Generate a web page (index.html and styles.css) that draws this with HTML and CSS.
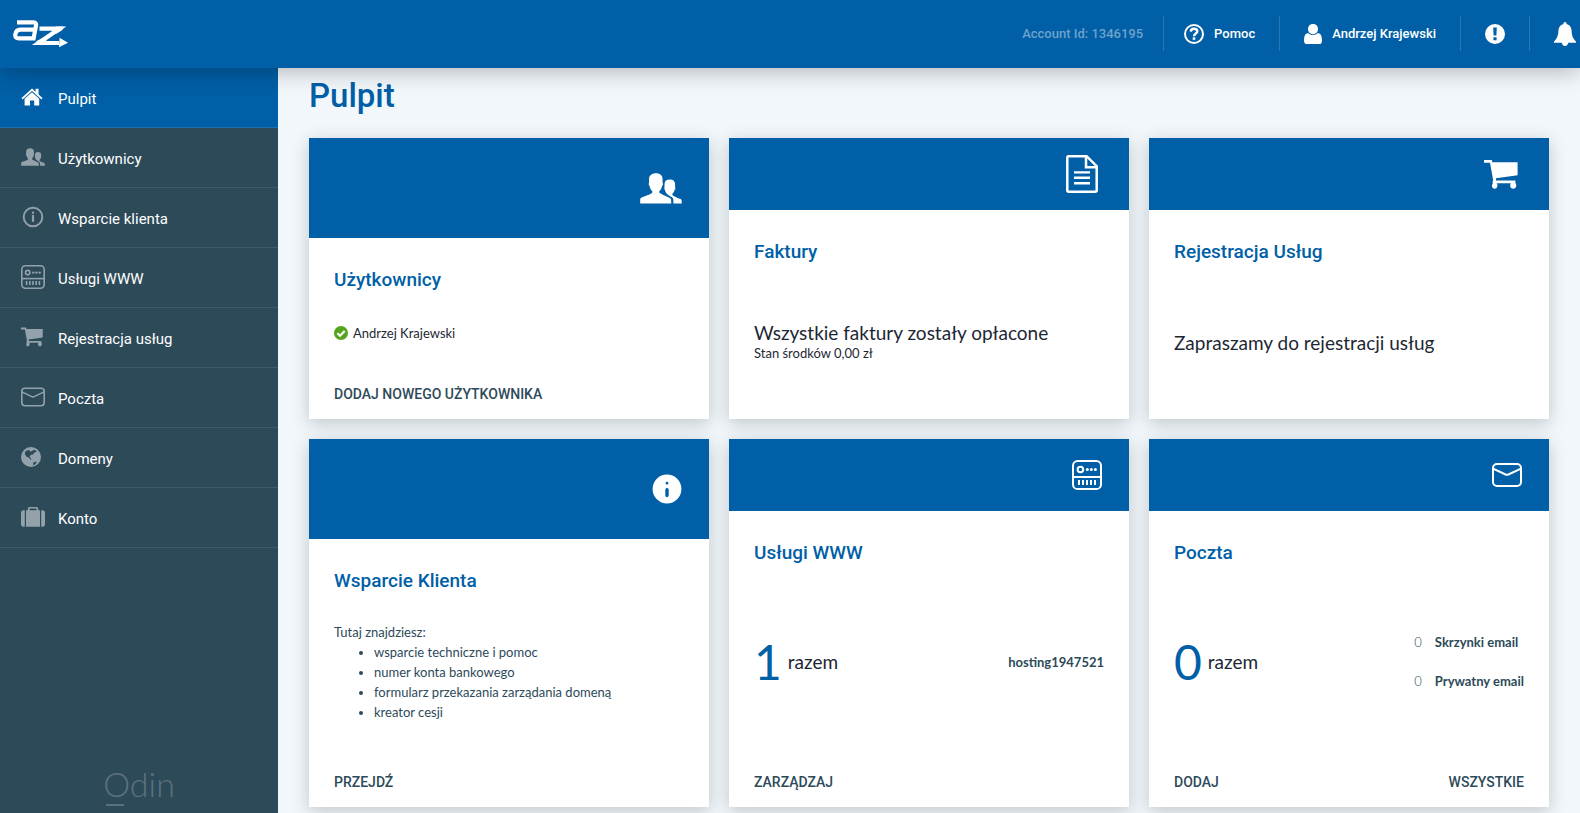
FILE: index.html
```html
<!DOCTYPE html>
<html lang="pl">
<head>
<meta charset="utf-8">
<title>Pulpit</title>
<meta name="viewport" content="width=device-width, initial-scale=1">
<link rel="stylesheet" href="styles.css">
</head>
<body>
<svg class="sprite" aria-hidden="true">
  <symbol id="i-home" viewBox="0 0 22 18">
    <path d="M11 0.5 L14.6 3.8 V0.8 H17.6 V6.6 L21.5 10.1 L20.4 11.4 L11 2.9 L1.6 11.4 L0.5 10.1 Z"/>
    <path d="M11 4.3 L18.2 10.8 V17.5 H13.2 V12.4 H9 V17.5 H3.6 V10.8 Z"/>
  </symbol>
  <symbol id="i-users" viewBox="0 0 42 31">
    <path d="M16 0.3 C20.5 0.3 22.6 2.6 22.6 6.4 V10 C23.2 10.2 23.1 12.4 22.2 12.8 C21.8 15.4 20.6 17 19.3 18.2 V19.6 C20.5 21.3 27 23.4 30.2 25.2 C31.2 25.9 31.2 27 31.2 30.6 H0.2 V26.4 C0.2 25.2 0.8 24.8 1.8 24.4 C6 22.6 11 21.2 12.3 19.4 V18.2 C10.9 17 9.9 15.4 9.5 12.8 C8.6 12.4 8.5 10.2 9 10 V6.4 C9 2.6 11.5 0.3 16 0.3 Z"/>
    <path d="M29.8 6.6 C33.4 6.6 35.1 8.5 35.1 11.4 V14.2 C35.6 14.5 35.5 16.4 34.7 16.7 C34.3 18.6 33.4 19.8 32.4 20.8 V21.9 C33.4 23.3 38 24.8 40.6 26 C41.6 26.5 41.8 27 41.8 30.6 H33.4 C33.4 26.6 33.5 25.4 32 24.2 C30.6 23.2 28.9 22.4 27.6 21.4 C25.7 20 25.1 17.8 24.9 16.7 C24.2 16.4 24.1 14.5 24.5 14.2 V11.4 C24.5 8.5 26.2 6.6 29.8 6.6 Z"/>
  </symbol>
  <symbol id="i-info-line" viewBox="0 0 22 22">
    <circle cx="11" cy="11" r="9.3" fill="none" stroke="currentColor" stroke-width="1.9"/>
    <rect x="9.9" y="9" width="2.2" height="6.8"/><rect x="9.9" y="5.6" width="2.2" height="2.1"/>
  </symbol>
  <symbol id="i-server" viewBox="0 0 30 30">
    <g fill="none" stroke="currentColor" stroke-width="2"><rect x="1" y="1" width="28" height="28" rx="4.6"/><path d="M1 17 H29"/><circle cx="8.4" cy="9.5" r="2.8"/></g>
    <circle cx="15.3" cy="9.5" r="1.5"/><circle cx="19.3" cy="9.5" r="1.5"/><circle cx="23.4" cy="9.5" r="1.5"/>
    <path d="M6 20h2v5H6zM10 20h2v5h-2zM14 20h2v5h-2zM18 20h2v5h-2zM22 20h2v5h-2z"/>
  </symbol>
  <symbol id="i-cart" viewBox="0 0 34 29">
    <path d="M0 0 H7.4 C8 0 8.2 0.8 8.3 2.3 H33.6 V15.3 L12 18.2 V20.6 H31.4 V23 C32.4 23.6 32.2 25 32.2 26 C32 29.6 26.4 29.6 26.2 26 C26.2 24.9 26.3 24 27 23.2 H12.6 C13.4 24 13.6 25 13.4 26 C13.1 29.6 8 29.6 8 26 C8 24.8 8.3 23.8 9 23.2 C8.4 22.2 8.2 21.4 9.2 20.4 L6 2.8 H0 Z"/>
  </symbol>
  <symbol id="i-mail" viewBox="0 0 30 24">
    <g fill="none" stroke="currentColor" stroke-width="2"><rect x="1" y="1" width="28" height="22" rx="4"/><path d="M1 5.6 L13.6 11.5 Q15 12.2 16.4 11.5 L29 5.6"/></g>
  </symbol>
  <symbol id="i-globe" viewBox="0 0 20 20">
    <path fill-rule="evenodd" d="M10 0 A10 10 0 1 1 10 20 A10 10 0 1 1 10 0 Z M7.4 2.8 L4.4 4.6 L3.8 7 L5.6 9.8 L8 10.8 L9.6 12.8 L10.4 12.6 L9.6 10.8 L8.6 9.6 L10 7.8 L12 7.6 L13.4 5.6 L15.8 4.8 L14.4 3.2 L12.4 2.8 L11 4.2 L9.4 4.4 Z M12.2 15.6 L15.8 14.4 L14.6 17 L12 18.2 Z"/>
  </symbol>
  <symbol id="i-case" viewBox="0 0 24 20">
    <path d="M3.8 3.2 H2.6 Q0 3.2 0 6 V17 Q0 19.8 2.6 19.8 H3.8 Z M20.2 3.2 H21.4 Q24 3.2 24 6 V17 Q24 19.8 21.4 19.8 H20.2 Z"/>
    <path fill-rule="evenodd" d="M5 3.2 H6.8 V1.6 Q6.8 0 8.4 0 H15.6 Q17.2 0 17.2 1.6 V3.2 H19 V19.8 H5 Z M8.6 1.6 V3.2 H15.4 V1.6 Z"/>
  </symbol>
  <symbol id="i-help" viewBox="0 0 20 20">
    <circle cx="10" cy="10" r="9" fill="none" stroke="currentColor" stroke-width="2"/>
    <path d="M6.8 7.6 C6.9 5.6 8.2 4.7 10 4.7 C12 4.7 13.3 5.8 13.3 7.4 C13.3 9.6 10 9.5 10 12.3" fill="none" stroke="currentColor" stroke-width="2.4"/>
    <rect x="8.7" y="13.4" width="2.6" height="2.4"/>
  </symbol>
  <symbol id="i-user" viewBox="0 0 18 20">
    <path d="M9 0 C12.2 0 14 2.2 14 5 C14 7.8 12 10.3 9 10.3 C6 10.3 4 7.8 4 5 C4 2.2 5.8 0 9 0 Z"/>
    <path d="M4.2 9 C6.6 11.8 11.4 11.8 13.8 9 C16.8 9.4 18 12 18 16.4 C18 18.8 17 20 15 20 H3 C1 20 0 18.8 0 16.4 C0 12 1.2 9.4 4.2 9 Z"/>
  </symbol>
  <symbol id="i-alert" viewBox="0 0 20 20">
    <path fill-rule="evenodd" d="M10 0 A10 10 0 1 1 10 20 A10 10 0 1 1 10 0 Z M8.2 3.4 L8.6 11.6 H11.4 L11.8 3.4 Z M8.4 13.2 V16.2 H11.6 V13.2 Z"/>
  </symbol>
  <symbol id="i-bell" viewBox="0 0 22 24">
    <path d="M11 0 C12 0 12.7 0.8 12.6 1.9 C16 2.8 17.4 5.4 17.6 8.8 C17.9 14 19 16.6 22 19.6 V20.8 H14.2 C14 22.8 12.8 24 11 24 C9.2 24 8 22.8 7.8 20.8 H0 V19.6 C3 16.6 4.1 14 4.4 8.8 C4.6 5.4 6 2.8 9.4 1.9 C9.3 0.8 10 0 11 0 Z"/>
  </symbol>
  <symbol id="i-doc" viewBox="0 0 32 38">
    <path d="M2.6 1.2 H20.6 L30.7 11.2 V35.2 Q30.7 36.7 29.2 36.7 H2.8 Q1.3 36.7 1.3 35.2 V2.6 Q1.3 1.2 2.6 1.2 Z M20 1.5 V12.2 H30.4" fill="none" stroke="currentColor" stroke-width="2.5"/>
    <path d="M8 16.2h16v2.4H8zM8 21.6h16V24H8zM8 27h16v2.4H8z"/>
  </symbol>
  <symbol id="i-info" viewBox="0 0 30 30">
    <path fill-rule="evenodd" d="M15 0.6 A14.4 14.4 0 1 1 15 29.4 A14.4 14.4 0 1 1 15 0.6 Z M15 7.8 A1.4 1.4 0 1 0 15 10.6 A1.4 1.4 0 1 0 15 7.8 Z M13.3 15.5 V21.5 Q15 25.2 16.7 21.5 V15.5 Q15 11.8 13.3 15.5 Z"/>
  </symbol>
  <symbol id="i-check" viewBox="0 0 14 14">
    <circle cx="7" cy="7" r="7"/><path d="M3.4 7.2 L6 9.7 L10.7 4.9" fill="none" stroke="#fff" stroke-width="2.2"/>
  </symbol>
</svg>

<header class="topbar">
  <a class="logo" href="#" aria-label="az">
    <svg viewBox="0 0 56 28" width="56" height="28">
      <g fill="none" stroke="currentColor" stroke-width="4.2">
        <path d="M4 2.4 H20.5 Q23.6 2.4 23 5.6 L20.6 18.4 H6 Q1.6 18.4 2.4 14.2 Q3.2 9.7 7.4 9.7 H22"/>
        <path d="M26.5 8.6 H46.6 L25.6 23 H46"/>
      </g>
      <path d="M23 25 L23.6 21 L30 18 L34 21 V25 Z M46.6 17.8 L55 22.8 L46 27.2 Z M43 6.5 H50 L49.4 10 L43 14 Z" fill="currentColor"/>
    </svg>
  </a>
  <div class="account">Account Id: 1346195</div>
  <a class="tool" href="#"><svg class="ic20"><use href="#i-help"/></svg>Pomoc</a>
  <button class="tool" type="button"><svg class="ic18"><use href="#i-user"/></svg>Andrzej Krajewski</button>
  <button class="tool" type="button" aria-label="Komunikaty"><svg class="ic20"><use href="#i-alert"/></svg></button>
  <button class="tool last" type="button" aria-label="Powiadomienia"><svg class="ic-bell"><use href="#i-bell"/></svg></button>
</header>

<div class="shell">
  <aside class="sidebar">
    <nav class="menu">
      <a class="active" href="#"><svg width="22" height="18"><use href="#i-home"/></svg>Pulpit</a>
      <a href="#"><svg width="24" height="18"><use href="#i-users"/></svg>Użytkownicy</a>
      <a href="#"><svg width="24" height="22"><use href="#i-info-line"/></svg>Wsparcie klienta</a>
      <a href="#"><svg width="24" height="24"><use href="#i-server"/></svg>Usługi WWW</a>
      <a href="#"><svg width="22" height="20"><use href="#i-cart"/></svg>Rejestracja usług</a>
      <a href="#"><svg width="24" height="20"><use href="#i-mail"/></svg>Poczta</a>
      <a href="#"><svg width="20" height="20"><use href="#i-globe"/></svg>Domeny</a>
      <a href="#"><svg width="24" height="20"><use href="#i-case"/></svg>Konto</a>
    </nav>
    <div class="odin">Odin</div>
  </aside>

  <main class="content">
    <h1>Pulpit</h1>
    <div class="grid">
      <section class="card">
        <div class="band tall"><svg width="42" height="31"><use href="#i-users"/></svg></div>
        <div class="body">
          <h2>Użytkownicy</h2>
          <div class="status"><svg width="14" height="14"><use href="#i-check"/></svg>Andrzej Krajewski</div>
          <div class="actions"><a href="#">DODAJ NOWEGO UŻYTKOWNIKA</a></div>
        </div>
      </section>

      <section class="card">
        <div class="band wide"><svg width="32" height="38"><use href="#i-doc"/></svg></div>
        <div class="body">
          <h2>Faktury</h2>
          <div class="message">
            <p class="lead">Wszystkie faktury zostały opłacone</p>
            <p class="sub">Stan środków 0,00 zł</p>
          </div>
        </div>
      </section>

      <section class="card">
        <div class="band wide"><svg width="34" height="29"><use href="#i-cart"/></svg></div>
        <div class="body">
          <h2>Rejestracja Usług</h2>
          <div class="message"><p class="lead">Zapraszamy do rejestracji usług</p></div>
        </div>
      </section>

      <section class="card">
        <div class="band tall"><svg width="30" height="30"><use href="#i-info"/></svg></div>
        <div class="body">
          <h2>Wsparcie Klienta</h2>
          <div class="help">
            <p>Tutaj znajdziesz:</p>
            <ul>
              <li>wsparcie techniczne i pomoc</li>
              <li>numer konta bankowego</li>
              <li>formularz przekazania zarządania domeną</li>
              <li>kreator cesji</li>
            </ul>
          </div>
          <div class="actions"><a href="#">PRZEJDŹ</a></div>
        </div>
      </section>

      <section class="card">
        <div class="band"><svg width="30" height="30"><use href="#i-server"/></svg></div>
        <div class="body">
          <h2>Usługi WWW</h2>
          <div class="summary">
            <div class="total"><strong>1</strong>razem</div>
            <a href="#">hosting1947521</a>
          </div>
          <div class="actions"><a href="#">ZARZĄDZAJ</a></div>
        </div>
      </section>

      <section class="card">
        <div class="band"><svg width="30" height="24"><use href="#i-mail"/></svg></div>
        <div class="body">
          <h2>Poczta</h2>
          <div class="summary">
            <div class="total"><strong>0</strong>razem</div>
            <ul class="counts">
              <li><span>0</span><a href="#">Skrzynki email</a></li>
              <li><span>0</span><a href="#">Prywatny email</a></li>
            </ul>
          </div>
          <div class="actions"><a href="#">DODAJ</a><a href="#">WSZYSTKIE</a></div>
        </div>
      </section>
    </div>
  </main>
</div>
</body>
</html>
```

FILE: styles.css
```css
* { box-sizing: border-box; }

body {
  margin: 0;
  display: flex;
  flex-direction: column;
  height: 100vh;
  overflow: hidden;
  background: #f2f7fb;
  color: #1d2733;
  font: 14px/20px Lato, "Open Sans", sans-serif;
}

a { color: inherit; text-decoration: none; }
h1, h2, p, ul { margin: 0; }
svg { flex: none; fill: currentColor; }
.sprite { display: none; }

/* Top bar */
.topbar {
  position: relative;
  z-index: 2;
  flex: none;
  display: flex;
  align-items: center;
  height: 68px;
  padding: 0 4px 1px 13px;
  background: #005fa6;
  color: #fff;
  box-shadow: 0 2px 24px rgba(0, 0, 0, 0.3);
  font: 500 13px/20px Roboto, sans-serif;
}
.logo { display: flex; margin-right: auto; color: #fff; }
.account { padding-right: 20px; color: #6da3cd; }
.tool {
  display: flex;
  align-items: center;
  gap: 10px;
  height: 35px;
  padding: 0 24px 0 20px;
  border: 0;
  border-left: 1px solid #2a79b5;
  background: none;
  color: inherit;
  font: inherit;
}
button.tool { padding: 0 24px; }
button.last { padding-right: 0; }
.ic20 { width: 20px; height: 20px; }
.ic18 { width: 18px; height: 20px; }
.ic-bell { width: 22px; height: 24px; }

/* Side menu */
.shell { flex: 1; display: flex; min-height: 0; }
.sidebar {
  flex: none;
  display: flex;
  flex-direction: column;
  width: 278px;
  background: #2d4a59;
}
.menu a {
  display: grid;
  grid-template-columns: 37px 1fr;
  align-items: center;
  height: 60px;
  padding: 3px 0 0 21px;
  border-bottom: 1px solid #3e5b6b;
  color: #fff;
  font: 15px/24px Roboto, sans-serif;
}
.menu svg { margin-bottom: 4px; color: #93a2aa; }
.menu .active { background: #005fa6; border-color: #1c70b0; }
.menu .active svg { color: #fff; }
.odin {
  align-self: center;
  margin-top: auto;
  color: #5b7180;
  font: 300 34px/40px Lato, sans-serif;
}
.odin::after {
  content: "";
  display: block;
  width: 18px;
  height: 2px;
  margin: 0 0 7px 3px;
  background: #5b7180;
}

/* Dashboard */
.content { flex: 1; min-width: 0; padding: 8px 31px 0; }
h1 {
  color: #005fa6;
  font: 500 33px/40px Roboto, sans-serif;
  margin-bottom: 22px;
}
.grid {
  display: grid;
  grid-template-columns: repeat(3, 1fr);
  grid-template-rows: 281px 368px;
  gap: 20px;
}
.card {
  display: flex;
  flex-direction: column;
  background: #fff;
  box-shadow: 0 4px 16px rgba(40, 50, 60, 0.25);
}
.band {
  flex: none;
  display: flex;
  align-items: center;
  justify-content: flex-end;
  height: 72px;
  padding-right: 27px;
  background: #005fa6;
  color: #fff;
}
.band.tall { height: 100px; }
.band.wide { padding-right: 31px; }
.body { flex: 1; display: flex; flex-direction: column; padding: 28px 25px 15px; }
h2 { color: #005fa6; font: 500 19px/28px Roboto, sans-serif; }
.status { display: flex; align-items: center; gap: 5px; margin-top: 29px; font-size: 13px; }
.status svg { color: #55a51c; }
.actions {
  display: flex;
  justify-content: space-between;
  margin-top: auto;
  color: #2d4a59;
  font: 500 14px/20px Roboto, sans-serif;
}
.message { flex: 1; display: flex; flex-direction: column; justify-content: center; padding-top: 16px; }
.lead { font-size: 19px; }
.sub { font-size: 13px; }
.help { margin-top: 27px; color: #2d4a59; font-size: 13px; }
.help ul { padding-left: 40px; }
.summary {
  flex: 1;
  display: flex;
  align-items: center;
  justify-content: space-between;
  padding-bottom: 16px;
  color: #2d4a59;
  font-size: 13px;
  font-weight: 700;
}
.total { display: flex; align-items: center; gap: 6px; color: #1d2733; font-size: 19px; font-weight: 400; }
.total strong { color: #005fa6; font-size: 48px; line-height: 56px; font-weight: 400; }
.counts { display: grid; gap: 19px; padding: 0; list-style: none; }
.counts li { display: flex; gap: 13px; }
.counts span { font-weight: 300; }
```
